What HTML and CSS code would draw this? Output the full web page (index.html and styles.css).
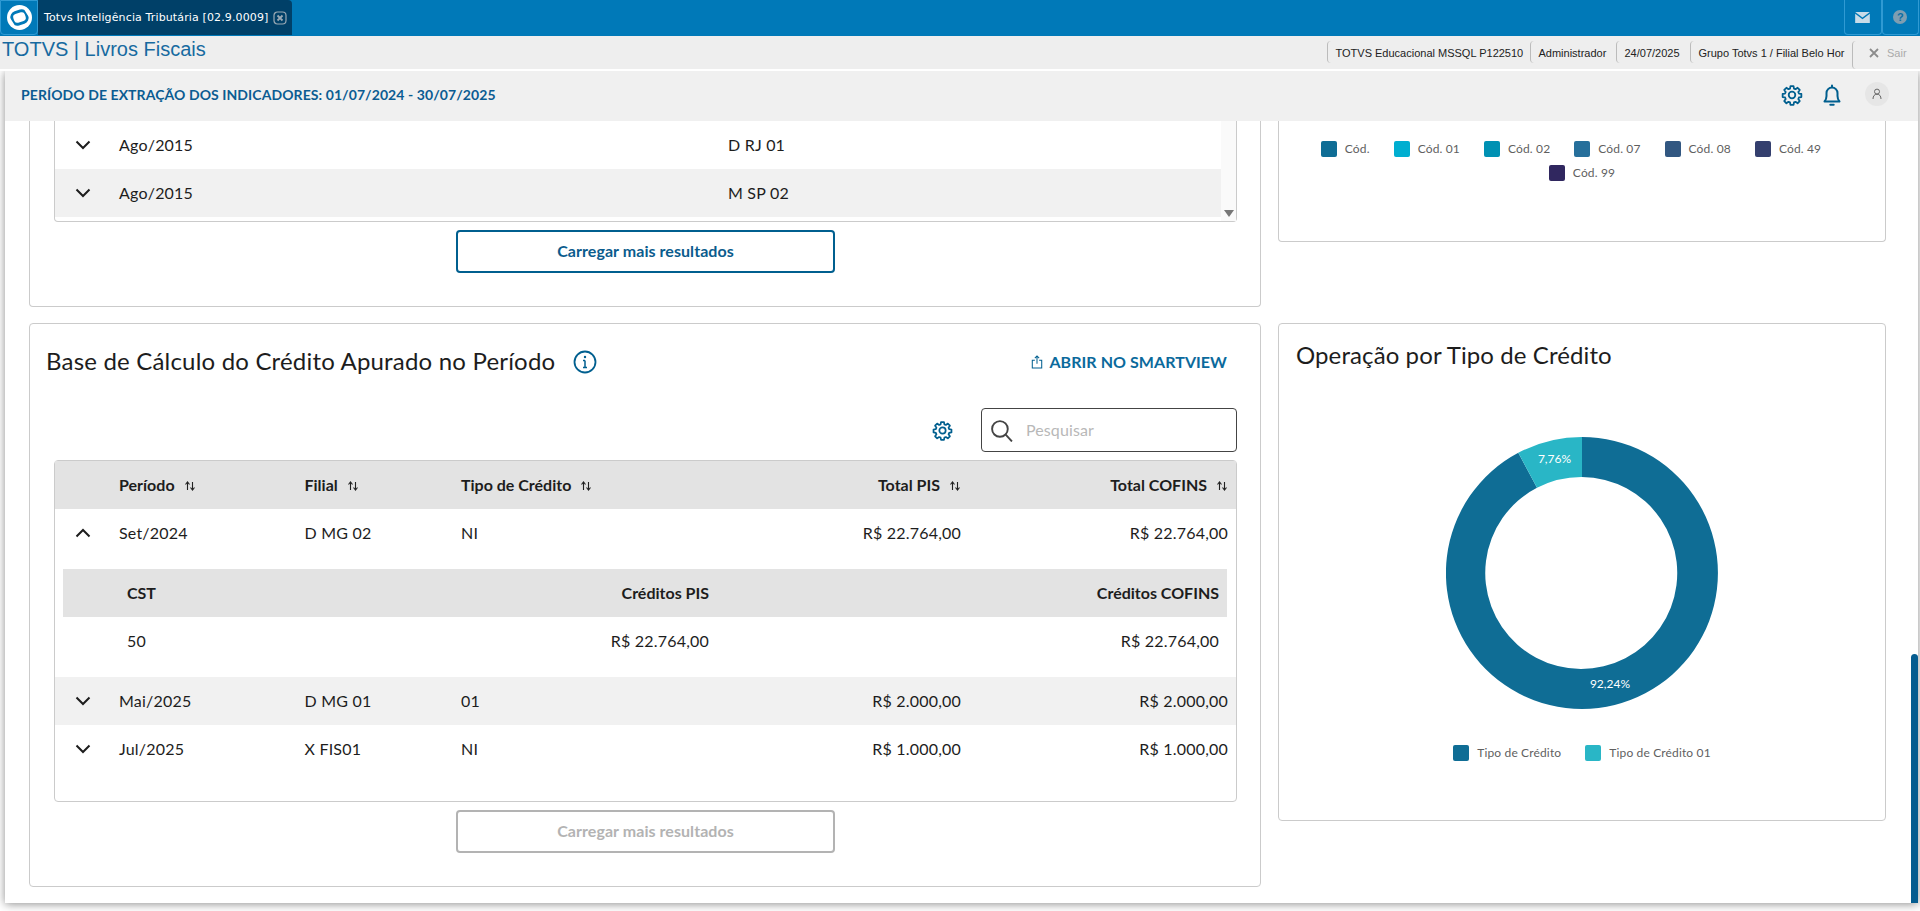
FILE: index.html
```html
<!DOCTYPE html>
<html lang="pt-BR">
<head>
<meta charset="utf-8">
<title>TOTVS | Livros Fiscais</title>
<link rel="stylesheet" href="styles.css">
</head>
<body>
<header class="topbar">
  <div class="logo-tab">
    <svg class="logo" viewBox="0 0 24 24" width="25" height="25"><circle cx="12" cy="12" r="12" fill="#fff"/><rect x="4.800" y="6.300" width="14.400" height="11.400" rx="4.500" transform="rotate(-18 12 12)" fill="none" stroke="#0079b8" stroke-width="2.800"/><path d="M16 3.500L21 8.500M3 15.500L8 20.500" stroke="#fff" stroke-width="2" transform="rotate(12 12 12)"/></svg>
  </div>
  <div class="app-tab">
    <span class="app-tab-text">Totvs Inteligência Tributária [02.9.0009]</span>
    <svg class="tab-close" viewBox="0 0 14 14" width="14" height="14"><rect x="1" y="1" width="12" height="12" rx="3.500" fill="none" stroke="#9aa9b4" stroke-width="1.200"/><path d="M4.500 4.500l5 5M9.500 4.500l-5 5" stroke="#9aa9b4" stroke-width="1.800"/></svg>
  </div>
  <div class="top-actions">
    <div class="top-btn"><svg viewBox="0 0 16 12" width="15" height="11"><path d="M0 0h16L8 6z" fill="#c9dce8"/><path d="M0 1.800l8 6 8-6V12H0z" fill="#c9dce8"/></svg></div>
    <div class="top-btn"><span class="help">?</span></div>
  </div>
</header>
<div class="band">
  <div class="band-title">TOTVS | Livros Fiscais</div>
  <div class="band-info">
    <span class="band-seg seg-env">TOTVS Educacional MSSQL P122510</span>
    <span class="band-seg seg-user">Administrador</span>
    <span class="band-seg seg-date">24/07/2025</span>
    <span class="band-seg seg-branch">Grupo Totvs 1 / Filial Belo Hor</span>
    <span class="band-seg seg-exit"><svg viewBox="0 0 10 10" width="10" height="10"><path d="M1 1l8 8M9 1l-8 8" stroke="#8c8c8c" stroke-width="1.800"/></svg><span class="exit-label">Sair</span></span>
  </div>
</div>
<div class="shell">
  <div class="page-head">
    <div class="page-head-title">PERÍODO DE EXTRAÇÃO DOS INDICADORES: 01/07/2024 - 30/07/2025</div>
    <svg class="head-gear" viewBox="0 0 24 24" width="24" height="24"><use href="#gear"/></svg>
    <svg class="head-bell" viewBox="0 0 24 24" width="24" height="24"><path d="M4.500 18.500c1.400-1.500 2-3 2-5.500V10a5.500 5.500 0 0 1 11 0v3c0 2.500.6 4 2 5.500zM12 4.500V2.500M10.300 21.800h3.400" fill="none" stroke="#005f8f" stroke-width="2" stroke-linecap="round" stroke-linejoin="round"/></svg>
    <div class="avatar"><svg viewBox="0 0 12 12" width="12" height="12"><circle cx="6" cy="3.600" r="2.500" fill="none" stroke="#666" stroke-width="1"/><path d="M2 11c0-3 1.500-4.800 4-4.800s4 1.800 4 4.800" fill="none" stroke="#666" stroke-width="1"/></svg></div>
  </div>
  <main class="content">
    <section class="card card-top">
      <div class="table table-cut">
        <div class="scroll-track"><span class="scroll-arrow"></span></div>
        <div class="row row-simple"><svg class="chev" viewBox="0 0 16 10" width="16" height="10"><path d="M1.500 1.500L8 8l6.500-6.500" fill="none" stroke="#1d1d1d" stroke-width="2"/></svg><span>Ago/2015</span><span>D RJ 01</span></div>
        <div class="row row-simple row-alt"><svg class="chev" viewBox="0 0 16 10" width="16" height="10"><path d="M1.500 1.500L8 8l6.500-6.500" fill="none" stroke="#1d1d1d" stroke-width="2"/></svg><span>Ago/2015</span><span>M SP 02</span></div>
      </div>
      <button class="more">Carregar mais resultados</button>
    </section>

    <section class="card card-legend">
      <div class="legend legend-first">
        <span class="leg"><i class="sw c1"></i>Cód.</span>
        <span class="leg"><i class="sw c2"></i>Cód. 01</span>
        <span class="leg"><i class="sw c3"></i>Cód. 02</span>
        <span class="leg"><i class="sw c4"></i>Cód. 07</span>
        <span class="leg"><i class="sw c5"></i>Cód. 08</span>
        <span class="leg"><i class="sw c6"></i>Cód. 49</span>
      </div>
      <div class="legend">
        <span class="leg"><i class="sw c7"></i>Cód. 99</span>
      </div>
    </section>

    <section class="card card-main">
      <div class="card-head">
        <h2 class="card-title">Base de Cálculo do Crédito Apurado no Período</h2>
        <svg class="info" viewBox="0 0 24 24" width="24" height="24"><circle cx="12" cy="12" r="10.500" fill="none" stroke="#005f8f" stroke-width="1.800"/><path d="M12 10.500v7M10 10.500h2M10 17.500h4" fill="none" stroke="#005f8f" stroke-width="1.500"/><circle cx="12" cy="7" r="1.200" fill="#005f8f"/></svg>
        <a class="smartview"><svg viewBox="0 0 14 16" width="12" height="14"><path d="M4.500 6H1.500v9h11V6H9.500M7 10V1.200M4.500 3.500L7 1l2.500 2.500" fill="none" stroke="#005f8f" stroke-width="1.200"/></svg><span class="smartview-text">ABRIR NO SMARTVIEW</span></a>
      </div>
      <div class="toolbar">
        <svg class="tool-gear" viewBox="0 0 24 24" width="23" height="23"><use href="#gear"/></svg>
        <div class="search">
          <svg viewBox="0 0 22 22" width="23" height="23"><circle cx="9.500" cy="9.500" r="7.500" fill="none" stroke="#444" stroke-width="1.800"/><path d="M15 15l6 6.500" stroke="#444" stroke-width="1.800"/></svg>
          <span class="placeholder">Pesquisar</span>
        </div>
      </div>
      <div class="table">
        <div class="row row-main row-head">
          <span></span>
          <span>Período<svg class="sort" viewBox="0 0 12 12" width="12" height="12"><use href="#sort"/></svg></span>
          <span>Filial<svg class="sort" viewBox="0 0 12 12" width="12" height="12"><use href="#sort"/></svg></span>
          <span>Tipo de Crédito<svg class="sort" viewBox="0 0 12 12" width="12" height="12"><use href="#sort"/></svg></span>
          <span class="num">Total PIS<svg class="sort" viewBox="0 0 12 12" width="12" height="12"><use href="#sort"/></svg></span>
          <span class="num">Total COFINS<svg class="sort" viewBox="0 0 12 12" width="12" height="12"><use href="#sort"/></svg></span>
        </div>
        <div class="row row-main">
          <svg class="chev" viewBox="0 0 16 10" width="16" height="10"><path d="M1.500 8.500L8 2l6.500 6.500" fill="none" stroke="#1d1d1d" stroke-width="2"/></svg>
          <span>Set/2024</span><span>D MG 02</span><span>NI</span><span class="num">R$ 22.764,00</span><span class="num">R$ 22.764,00</span>
        </div>
        <div class="detail">
          <div class="row row-sub row-head"><span>CST</span><span class="num">Créditos PIS</span><span class="num">Créditos COFINS</span></div>
          <div class="row row-sub"><span>50</span><span class="num">R$ 22.764,00</span><span class="num">R$ 22.764,00</span></div>
        </div>
        <div class="row row-main row-alt">
          <svg class="chev" viewBox="0 0 16 10" width="16" height="10"><path d="M1.500 1.500L8 8l6.500-6.500" fill="none" stroke="#1d1d1d" stroke-width="2"/></svg>
          <span>Mai/2025</span><span>D MG 01</span><span>01</span><span class="num">R$ 2.000,00</span><span class="num">R$ 2.000,00</span>
        </div>
        <div class="row row-main">
          <svg class="chev" viewBox="0 0 16 10" width="16" height="10"><path d="M1.500 1.500L8 8l6.500-6.500" fill="none" stroke="#1d1d1d" stroke-width="2"/></svg>
          <span>Jul/2025</span><span>X FIS01</span><span>NI</span><span class="num">R$ 1.000,00</span><span class="num">R$ 1.000,00</span>
        </div>
        <div class="table-foot"></div>
      </div>
      <button class="more more-off">Carregar mais resultados</button>
    </section>

    <section class="card card-donut">
      <h2 class="card-title donut-title">Operação por Tipo de Crédito</h2>
      <svg class="donut" viewBox="0 0 272 272" width="272" height="272">
        <path d="M136 0A136 136 0 1 1 72.300 15.800L91 50.800A96 96 0 1 0 136 40Z" fill="#0f6d95"/>
        <path d="M136 0A136 136 0 0 0 72.300 15.800L91 50.800A96 96 0 0 1 136 40Z" fill="#29b6c6"/>
        <text class="donut-label" x="108.500" y="26">7,76%</text>
        <text class="donut-label" x="164" y="251">92,24%</text>
      </svg>
      <div class="legend donut-legend">
        <span class="leg"><i class="sw c1"></i>Tipo de Crédito</span>
        <span class="leg"><i class="sw c8"></i>Tipo de Crédito 01</span>
      </div>
    </section>
  </main>
  <div class="thumb"></div>
</div>
<svg class="defs" width="0" height="0">
  <defs>
    <g id="gear"><path d="M10.300 2.500h3.400l.5 2.700 1.700.7 2.300-1.600 2.400 2.400-1.600 2.300.7 1.700 2.700.5v3.400l-2.700.5-.7 1.700 1.600 2.300-2.400 2.400-2.300-1.600-1.700.7-.5 2.700h-3.400l-.5-2.700-1.700-.7-2.300 1.600-2.400-2.400 1.600-2.300-.7-1.700-2.700-.5v-3.400l2.700-.5.7-1.700-1.600-2.300 2.400-2.400 2.300 1.600 1.700-.7z" transform="translate(1.200 .9) scale(.9)" fill="none" stroke="#005f8f" stroke-width="2" stroke-linejoin="round"/><circle cx="12" cy="12" r="3.300" fill="none" stroke="#005f8f" stroke-width="1.800"/></g>
    <g id="sort"><path d="M3.500 10V2.500M1.500 4.500l2-2.500 2 2.500" fill="none" stroke="#222" stroke-width="1.100"/><path d="M8.500 2v7.500M6.500 7.500l2 2.500 2-2.500" fill="none" stroke="#222" stroke-width="1.100"/></g>
  </defs>
</svg>
</body>
</html>
```

FILE: styles.css
```css
* { box-sizing: border-box; }
html, body { margin: 0; height: 911px; overflow: hidden; }
body { background: #fff; font-family: "Lato", "Noto Sans", sans-serif; color: #1d1d1d; font-size: 16px; }

.topbar { height: 36px; background: #0079b8; display: flex; }
.logo-tab { width: 38px; height: 35px; background: #0079b8; border: 1px solid #2f9ad3; border-radius: 0 0 4px 4px; display: flex; align-items: center; justify-content: center; }
.app-tab { width: 254px; height: 35px; background: #004068; border-radius: 0 4px 0 0; display: flex; align-items: center; padding-left: 6px; gap: 4px; }
.app-tab-text { font-family: "DejaVu Sans", sans-serif; font-size: 11px; letter-spacing: .13px; color: #fff; white-space: nowrap; }
.top-actions { margin-left: auto; display: flex; margin-right: 1px; }
.top-btn { width: 37.500px; height: 35px; border: 1px solid #2f9ad3; border-top: 0; border-radius: 0 0 4px 4px; display: flex; align-items: center; justify-content: center; }
.help { width: 14px; height: 14px; border-radius: 50%; background: #7f9eb1; color: #0a6ea5; font: bold 11px/14px "Liberation Sans", sans-serif; text-align: center; }

.band { position: relative; z-index: 1; height: 35px; background: #eee; border-bottom: 2px solid #fff; display: flex; align-items: stretch; justify-content: space-between; }
.band-title { font-family: "Liberation Sans", sans-serif; font-size: 20px; line-height: 26px; padding-left: 2px; color: #176aa0; }
.band-info { display: flex; font-family: "Liberation Sans", sans-serif; font-size: 11px; color: #222; padding-top: 5px; height: 33px; }
.band-seg { border-left: 1px solid #bbb; border-radius: 4px 0 0 4px; height: 22px; line-height: 24px; padding-left: 8px; white-space: nowrap; }
.seg-env { width: 203px; }
.seg-user { width: 86px; }
.seg-date { width: 74px; }
.seg-branch { width: 162.500px; }
.seg-exit { width: 68px; height: 28px; display: flex; align-items: flex-start; gap: 8px; padding: 7px 0 0 16px; line-height: 11px; color: #aaa; }
.exit-label { line-height: 11px; }

.shell { position: relative; margin: 0 2px 0 5px; height: 832px; background: #fff; box-shadow: 0 1px 9px rgba(0,0,0,.45); display: flex; flex-direction: column; overflow: hidden; }
.page-head { height: 50px; background: #f0f0f0; display: flex; align-items: center; padding-left: 16px; flex: none; }
.page-head-title { font-size: 14px; font-weight: 700; color: #0b5c92; letter-spacing: .08px; margin-right: auto; padding-bottom: 4px; }
.head-gear { margin-right: 16px; margin-bottom: 3px; }
.head-bell { margin-right: 21px; margin-bottom: 3px; }
.avatar { width: 24px; height: 24px; border-radius: 50%; background: #e6e6e6; margin-right: 29px; margin-bottom: 4px; display: flex; align-items: center; justify-content: center; }

.content { display: grid; grid-template-columns: 1232px 608px; grid-template-rows: 186px 564px; gap: 16px 17px; padding-left: 24px; align-items: start; }
.card { background: #fff; border: 1px solid #cbcbcb; border-radius: 4px; }
.card-top { height: 186px; border-top: 0; border-radius: 0 0 4px 4px; padding: 0 23px 0 24px; display: flex; flex-direction: column; align-items: center; }
.card-legend { height: 121px; border-top: 0; border-radius: 0 0 4px 4px; padding-top: 20px; }
.card-main { height: 564px; padding: 0 23px 0 24px; display: flex; flex-direction: column; }
.card-donut { height: 498px; display: flex; flex-direction: column; align-items: center; padding-top: 15px; }

.table { position: relative; width: 100%; border: 1px solid #cbcbcb; border-radius: 4px; }
.table-cut { border-top: 0; border-radius: 0 0 4px 4px; height: 101px; padding-right: 15px; }
.scroll-track { position: absolute; top: 0; right: 0; bottom: 0; width: 15px; background: #fafafa; }
.scroll-arrow { position: absolute; left: 3px; bottom: 4px; border: 5px solid transparent; border-top: 7px solid #777; border-bottom: 0; }

.row { display: grid; align-items: center; height: 48px; white-space: nowrap; letter-spacing: .2px; }
.row > span { padding-bottom: 2px; }
.row-simple { grid-template-columns: 64px 609px 1fr; }
.row-main { grid-template-columns: 64px 185.500px 156.500px 200px 300px 267px; padding-right: 8px; }
.row-sub { grid-template-columns: 200px 382px 1fr; padding: 0 8px 0 64px; }
.row-alt { background: #f1f1f1; }
.row-head { background: #e3e3e3; font-weight: 700; letter-spacing: 0; }
.row .chev { justify-self: center; margin-left: -9px; }
.num { text-align: right; }
.sort { margin-left: 9px; vertical-align: -1px; }
.detail { padding: 12px 9px 12px 8px; }
.table-foot { height: 28px; }

.more { display: block; width: 379px; height: 43px; margin: 8px auto 0; padding: 0 0 2px; background: #fff; border: 2px solid #005f8f; border-radius: 4px; font: 700 16px "Lato", "Noto Sans", sans-serif; letter-spacing: .06px; color: #0b5c8d; }
.more-off { border-color: #b3b3b3; color: #b3b3b3; }

.card-head { height: 76px; display: flex; align-items: center; margin-left: -8px; padding-right: 10px; }
.card-title { margin: 0; padding-bottom: 2px; font-size: 24px; font-weight: 400; color: #1d1d1d; line-height: 32px; white-space: nowrap; letter-spacing: .19px; }
.info { margin-left: 18px; }
.smartview { margin-left: auto; display: flex; align-items: center; gap: 6px; font-size: 16px; font-weight: 700; color: #0b6a9c; }
.smartview-text { padding-bottom: 2px; letter-spacing: .06px; }
.toolbar { margin-top: 8px; height: 44px; display: flex; align-items: center; justify-content: flex-end; gap: 27px; flex: none; }
.search { width: 256px; height: 44px; border: 1px solid #444; border-radius: 4px; display: flex; align-items: center; gap: 13px; padding-left: 8px; }
.placeholder { color: #b8b8b8; padding-bottom: 2px; letter-spacing: .1px; }
.card-main .table { margin-top: 8px; flex: none; }

.donut-title { align-self: flex-start; margin-left: 17px; letter-spacing: .1px; }
.donut { margin-top: 64px; flex: none; }
.donut-label { font: 12px "Lato", "Noto Sans", sans-serif; fill: #fff; text-anchor: middle; }
.donut-legend { margin-top: 36px; letter-spacing: .05px; }

.legend { display: flex; justify-content: center; gap: 24px; height: 24px; font-size: 12px; color: #5f5f5f; letter-spacing: .15px; }
.legend-first { padding-right: 22px; }
.leg { display: flex; align-items: flex-start; gap: 8px; line-height: 16px; white-space: nowrap; }
.sw { width: 16px; height: 16px; border-radius: 2px; flex: none; }
.c1 { background: #0f6d95; }
.c2 { background: #00aed0; }
.c3 { background: #0091b3; }
.c4 { background: #266f9b; }
.c5 { background: #325781; }
.c6 { background: #343f6e; }
.c7 { background: #30275f; }
.c8 { background: #29b6c6; }

.thumb { position: absolute; right: 0; top: 583px; width: 7px; bottom: 0; background: #065d90; border-radius: 4px 4px 0 0; }
.defs { position: absolute; }
```
